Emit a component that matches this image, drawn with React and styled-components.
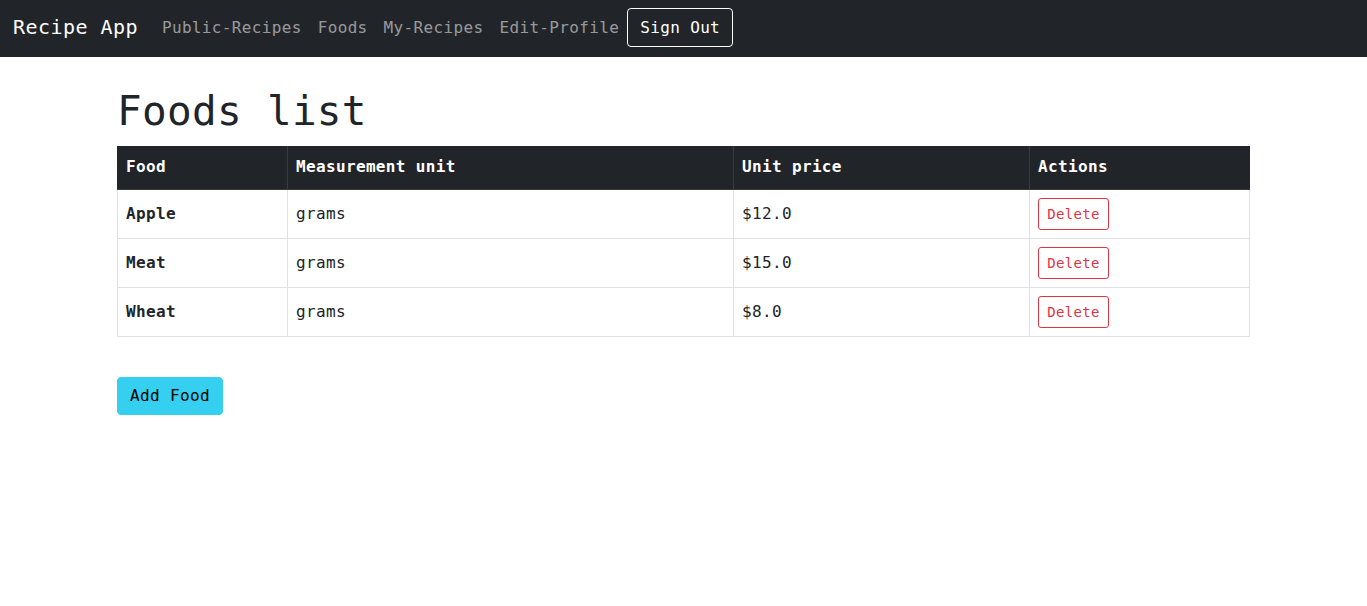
import React from "react"
import styled, { createGlobalStyle } from 'styled-components';

const foods = [
    { name: 'Apple', unit: 'grams', price: '$12.0' },
    { name: 'Meat', unit: 'grams', price: '$15.0' },
    { name: 'Wheat', unit: 'grams', price: '$8.0' },
]

const links = ['Public-Recipes', 'Foods', 'My-Recipes', 'Edit-Profile']

export default function App() {
    return (
        <>
            <GlobalStyle />
            <Navbar>
                <Brand href="#">Recipe App</Brand>
                <NavList>
                    {links.map((l) => (
                        <NavLink key={l} href="#">{l}</NavLink>
                    ))}
                    <SignOut>Sign Out</SignOut>
                </NavList>
            </Navbar>
            <Main>
                <Title>Foods list</Title>
                <Table>
                    <thead>
                        <tr>
                            <Th $w={170}>Food</Th>
                            <Th $w={446}>Measurement unit</Th>
                            <Th $w={296}>Unit price</Th>
                            <Th>Actions</Th>
                        </tr>
                    </thead>
                    <tbody>
                        {foods.map((f) => (
                            <tr key={f.name}>
                                <Td $bold>{f.name}</Td>
                                <Td>{f.unit}</Td>
                                <Td>{f.price}</Td>
                                <Td><DeleteBtn>Delete</DeleteBtn></Td>
                            </tr>
                        ))}
                    </tbody>
                </Table>
                <AddBtn>Add Food</AddBtn>
            </Main>
        </>
    )
}

const GlobalStyle = createGlobalStyle`
    * { box-sizing: border-box; }
    body {
        margin: 0;
        background: #fff;
        color: #212529;
        font-family: "DejaVu Sans Mono", "Liberation Mono", monospace;
        font-size: 16px;
        line-height: 1.5;
        letter-spacing: 0.35px;
    }
    button { white-space: nowrap; }
`

const Navbar = styled.nav`
    display: flex;
    align-items: center;
    height: 57px;
    padding: 0 12px 0 13px;
    background-color: #212529;
`

const Brand = styled.a`
    color: #fff;
    font-size: 20px;
    letter-spacing: 0.45px;
    text-decoration: none;
    margin-right: 16px;
    margin-top: -3px;
`

const NavList = styled.div`
    display: flex;
    align-items: center;
`

const NavLink = styled.a`
    color: rgba(255, 255, 255, 0.55);
    text-decoration: none;
    padding: 8px;
    margin-top: -1px;
`

const SignOut = styled.button`
    font-family: inherit;
    font-size: 16px;
    letter-spacing: 0.35px;
    line-height: 1.5;
    color: #fff;
    background: transparent;
    border: 1px solid #fff;
    border-radius: 4px;
    padding: 6px 12px;
    height: 39px;
    margin-top: -2px;
`

const Main = styled.main`
    max-width: 1133px;
    margin: 0 auto;
`

const Title = styled.h1`
    font-size: 41px;
    font-weight: 400;
    letter-spacing: 0.3px;
    line-height: 1.2;
    margin: 30px 0 10px;
`

const Table = styled.table`
    width: 100%;
    border-collapse: collapse;
    margin-bottom: 40px;
`

const Th = styled.th`
    width: ${(props) => (props.$w ? props.$w + 'px' : 'auto')};
    text-align: left;
    background-color: #212529;
    color: #fff;
    font-weight: 700;
    padding: 8px 8px 10px;
    border: 1px solid #373b3e;
    border-top-color: #212529;
    &:first-child { border-left-color: #212529; }
    &:last-child { border-right-color: #212529; }
`

const Td = styled.td`
    padding: 8px;
    border: 1px solid #dee2e6;
    font-weight: ${(props) => (props.$bold ? 700 : 400)};
    vertical-align: middle;
`

const DeleteBtn = styled.button`
    font-family: inherit;
    font-size: 14px;
    letter-spacing: 0.35px;
    line-height: 1.5;
    color: #dc3545;
    background: #fff;
    border: 1px solid #dc3545;
    border-radius: 3px;
    padding: 4px 8px;
    width: 71px;
    height: 32px;
`

const AddBtn = styled.button`
    font-family: inherit;
    font-size: 16px;
    letter-spacing: 0.35px;
    line-height: 1.5;
    color: #000;
    background-color: #35cff0;
    border: 1px solid #35cff0;
    border-radius: 4px;
    padding: 6px 12px;
    width: 106px;
    height: 38px;
`
